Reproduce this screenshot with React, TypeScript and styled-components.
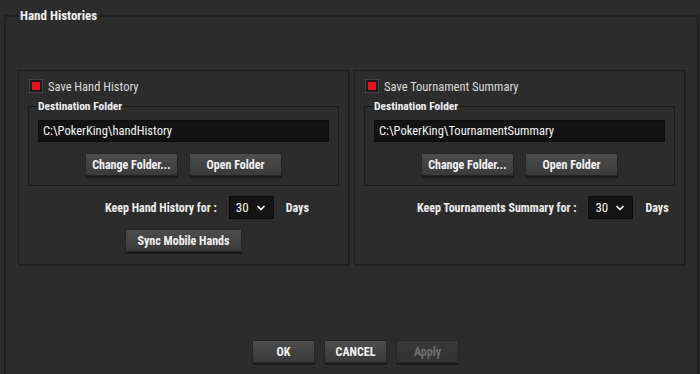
import React from "react";
import styled, { createGlobalStyle } from "styled-components";
import { ChevronDown } from "lucide-react";

const Global = createGlobalStyle`
  html, body {
    margin: 0;
    padding: 0;
    background: #2c2c2c;
    overflow: hidden;
  }
  body {
    font-family: "Roboto Condensed", "Liberation Sans Narrow", "DejaVu Sans Condensed", Roboto, sans-serif;
    color: #e4e4e4;
  }
`;

const Frame = styled.fieldset`
  margin: 8px 2px 0 4px;
  padding: 46px 12px 0 12px;
  height: 366px;
  border: 2px solid #1f1f1f;
  border-bottom: none;
  box-sizing: border-box;
`;

const FrameTitle = styled.legend`
  padding: 0 2px;
  font-size: 13px;
  font-weight: 700;
  line-height: 16px;
  color: #f2f2f2;
`;

const PanelRow = styled.div`
  display: flex;
  gap: 5px;
`;

const Panel = styled.div`
  width: 331px;
  box-sizing: border-box;
  padding: 8px 9px 12px 9px;
  border: 1px solid #1c1c1c;
  box-shadow: 1px 1px 0 #202020;
  display: flex;
  flex-direction: column;
`;

const CheckRow = styled.label`
  display: flex;
  align-items: center;
  gap: 5px;
  height: 14px;
  padding-left: 1px;
  font-size: 12.5px;
  color: #dcdcdc;
`;

const Check = styled.span`
  width: 14px;
  height: 14px;
  box-sizing: border-box;
  border: 1px solid #444;
  background: #1c1c1c;
  display: flex;
  align-items: center;
  justify-content: center;
  &::after {
    content: "";
    width: 8px;
    height: 8px;
    background: #e5141b;
  }
`;

const Dest = styled.fieldset`
  margin: 6px 0 0 0;
  padding: 0 9px 9px 9px;
  border: 1px solid #1a1a1a;
  box-shadow: 0 1px 0 #333;
`;

const DestTitle = styled.legend`
  padding: 0;
  font-size: 11.5px;
  font-weight: 700;
  line-height: 14px;
  color: #f0f0f0;
`;

const PathBox = styled.div`
  margin-top: 7px;
  height: 22px;
  box-sizing: border-box;
  padding: 0 4px;
  background: #121212;
  border: 1px solid #0d0d0d;
  font-size: 12.5px;
  line-height: 20px;
  color: #f4f4f4;
`;

const ButtonRow = styled.div`
  display: flex;
  justify-content: center;
  gap: 11px;
  margin-top: 11px;
`;

const Button = styled.button<{ $w: number; $disabled?: boolean }>`
  width: ${(p) => p.$w}px;
  height: 23px;
  padding: 0;
  border: 1px solid #242424;
  border-radius: 1px;
  background: ${(p) =>
    p.$disabled
      ? "linear-gradient(#383838, #323232)"
      : "linear-gradient(#4d4d4d, #3a3a3a)"};
  box-shadow: 0 2px 0 #1b1b1b;
  font-family: inherit;
  font-size: 12px;
  font-weight: 700;
  color: ${(p) => (p.$disabled ? "#6f6f6f" : "#f2f2f2")};
`;

const KeepRow = styled.div<{ $indent: number }>`
  display: flex;
  align-items: center;
  margin-top: 10px;
  padding-left: ${(p) => p.$indent}px;
  font-size: 12px;
  font-weight: 700;
  color: #eeeeee;
`;

const Select = styled.div`
  margin: 0 12px 0 12px;
  width: 45px;
  height: 23px;
  box-sizing: border-box;
  padding: 0 6px;
  background: #141414;
  border: 1px solid #0b0b0b;
  display: flex;
  align-items: center;
  justify-content: space-between;
  font-size: 13px;
  font-weight: 400;
  color: #f4f4f4;
`;

const SyncRow = styled.div`
  display: flex;
  justify-content: center;
  margin-top: 10px;
`;

const Footer = styled.div`
  display: flex;
  justify-content: center;
  gap: 9px;
  margin-top: 75px;
  padding-left: 8px;
`;

type PanelProps = {
  title: string;
  path: string;
  keepLabel: string;
  indent: number;
  sync?: boolean;
};

function HistoryPanel({ title, path, keepLabel, indent, sync }: PanelProps) {
  return (
    <Panel>
      <CheckRow>
        <Check />
        {title}
      </CheckRow>
      <Dest>
        <DestTitle>Destination Folder</DestTitle>
        <PathBox>{path}</PathBox>
        <ButtonRow>
          <Button $w={93}>Change Folder...</Button>
          <Button $w={93}>Open Folder</Button>
        </ButtonRow>
      </Dest>
      <KeepRow $indent={indent}>
        {keepLabel}
        <Select>
          30
          <ChevronDown size={12} strokeWidth={3.5} color="#f4f4f4" />
        </Select>
        Days
      </KeepRow>
      {sync && (
        <SyncRow>
          <Button $w={117}>Sync Mobile Hands</Button>
        </SyncRow>
      )}
    </Panel>
  );
}

export default function App() {
  return (
    <>
      <Global />
      <Frame>
        <FrameTitle>Hand Histories</FrameTitle>
        <PanelRow>
          <HistoryPanel
            title="Save Hand History"
            path="C:\PokerKing\handHistory"
            keepLabel="Keep Hand History for :"
            indent={77}
            sync
          />
          <HistoryPanel
            title="Save Tournament Summary"
            path="C:\PokerKing\TournamentSummary"
            keepLabel="Keep Tournaments Summary for :"
            indent={53}
          />
        </PanelRow>
        <Footer>
          <Button $w={63}>OK</Button>
          <Button $w={63}>CANCEL</Button>
          <Button $w={63} $disabled>
            Apply
          </Button>
        </Footer>
      </Frame>
    </>
  );
}
